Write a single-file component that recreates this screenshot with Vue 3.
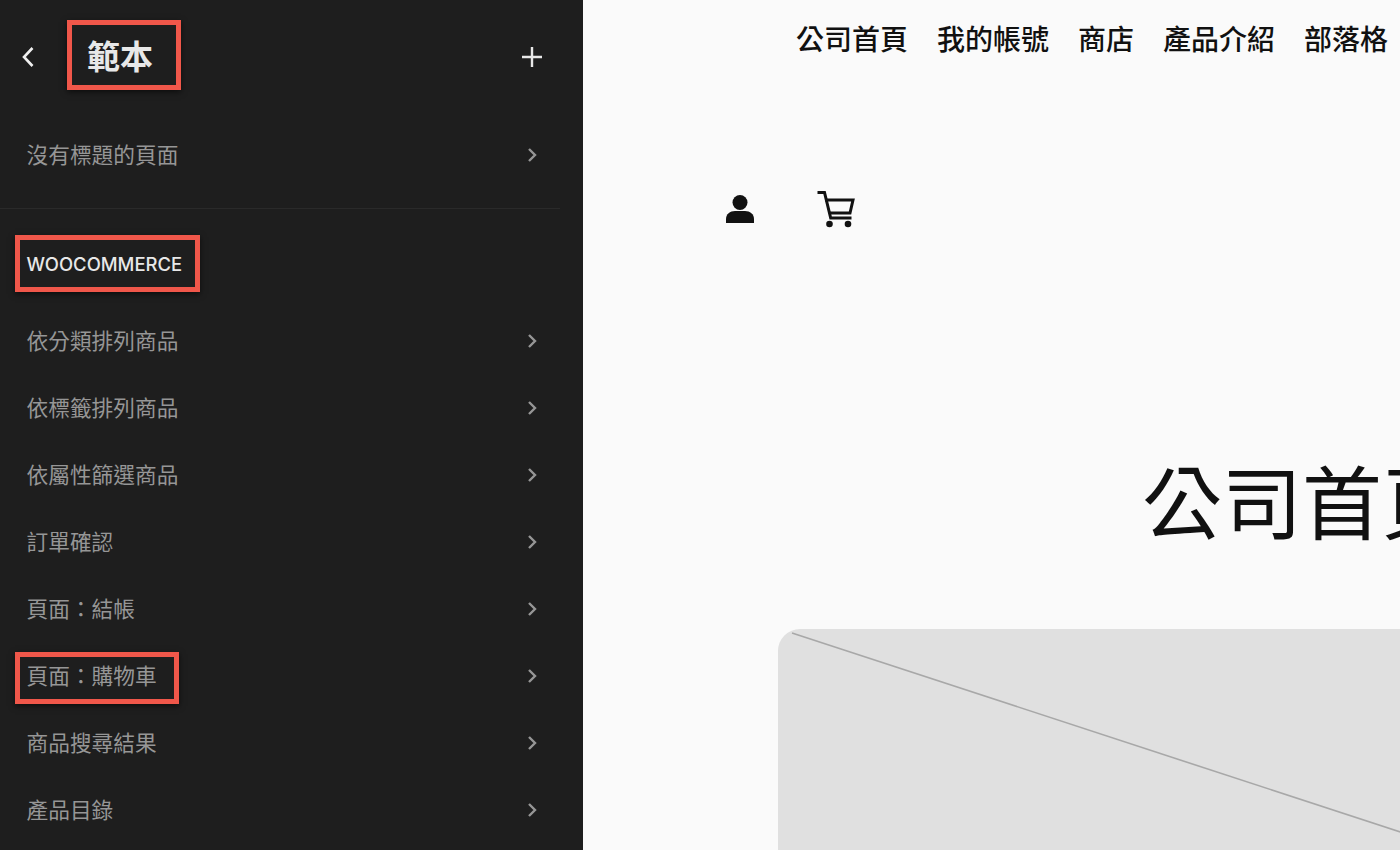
<script setup>
const navLinks = ['公司首頁', '我的帳號', '商店', '產品介紹', '部落格']

const wooItems = [
  { label: '依分類排列商品' },
  { label: '依標籤排列商品' },
  { label: '依屬性篩選商品' },
  { label: '訂單確認' },
  { label: '頁面：結帳' },
  { label: '頁面：購物車', marked: true },
  { label: '商品搜尋結果' },
  { label: '產品目錄' }
]
</script>

<template>
  <div class="page">
    <aside class="sidebar">
      <div class="side-head">
        <svg class="back" width="16" height="24" viewBox="0 0 16 24">
          <path d="M12.5 3 L4 12 L12.5 21" fill="none" stroke="#f0f0f0" stroke-width="2.6" />
        </svg>
        <h1 class="side-title"><span class="mark mark-title">範本</span></h1>
        <svg class="plus" width="22" height="22" viewBox="0 0 22 22">
          <path d="M11 1 V21 M1 11 H21" fill="none" stroke="#e8e8e8" stroke-width="2.4" />
        </svg>
      </div>

      <div class="first-group">
        <a class="row">
          <span>沒有標題的頁面</span>
          <svg class="chev" width="10" height="16" viewBox="0 0 10 16">
            <path d="M2 2 L8 8 L2 14" fill="none" stroke="#969696" stroke-width="2.4" />
          </svg>
        </a>
      </div>

      <div class="group-label">
        <span class="mark mark-label">WOOCOMMERCE</span>
      </div>

      <a v-for="item in wooItems" :key="item.label" class="row">
        <span :class="{ mark: item.marked, 'mark-row': item.marked }">{{ item.label }}</span>
        <svg class="chev" width="10" height="16" viewBox="0 0 10 16">
          <path d="M2 2 L8 8 L2 14" fill="none" stroke="#969696" stroke-width="2.4" />
        </svg>
      </a>
    </aside>

    <main class="preview">
      <nav class="top-nav">
        <a v-for="link in navLinks" :key="link">{{ link }}</a>
      </nav>

      <div class="icons">
        <svg width="30" height="30" viewBox="0 0 30 30">
          <circle cx="15" cy="8.5" r="7.5" fill="#111" />
          <path d="M1 29 V25 C1 20 5 17 10 17 H20 C25 17 29 20 29 25 V29 Z" fill="#111" />
        </svg>
        <svg width="38" height="38" viewBox="0 0 38 38">
          <path d="M0.5 2.5 H7.5 L13.7 28 H34.5" fill="none" stroke="#111" stroke-width="3" />
          <path d="M8 10 H36 L33 23 H12.5" fill="none" stroke="#111" stroke-width="3" />
          <circle cx="12.5" cy="34" r="3.3" fill="#111" />
          <circle cx="31" cy="34" r="3.3" fill="#111" />
        </svg>
      </div>

      <h2 class="page-title">公司首頁</h2>

      <div class="placeholder">
        <svg width="1200" height="400" viewBox="0 0 1200 400">
          <line x1="14" y1="4" x2="1200" y2="392" stroke="#a8a8a8" stroke-width="1.6" />
        </svg>
      </div>
    </main>
  </div>
</template>

<style>
html,
body {
  background: #fafafa;
  overflow: hidden;
}
</style>

<style scoped>
.page {
  display: flex;
  width: 1400px;
  height: 850px;
  overflow: hidden;
  font-family: Inter, "Noto Sans CJK TC", sans-serif;
}

.sidebar {
  flex: 0 0 583px;
  height: 850px;
  overflow: hidden;
  background: #1e1e1e;
  color: #969696;
  box-sizing: border-box;
}

.side-head {
  display: flex;
  align-items: center;
  height: 114px;
  padding: 0 40px 0 20px;
}

.back {
  margin-right: 51px;
}

.side-title {
  flex: 1;
  margin: 0;
  font-size: 33px;
  font-weight: 700;
  line-height: 40px;
  color: #e8e8e8;
}

.first-group {
  height: 95px;
  padding-top: 6px;
  margin-right: 23px;
  box-sizing: border-box;
  border-bottom: 1px solid #2a2a2a;
}

.group-label {
  height: 97px;
  padding: 43px 27px 0 26.5px;
  box-sizing: border-box;
  font-size: 18.45px;
  font-weight: 500;
  line-height: 24px;
  color: #e8e8e8;
}

.row {
  display: flex;
  align-items: center;
  justify-content: space-between;
  height: 67px;
  padding: 0 46px 0 26.5px;
  font-size: 21.7px;
}

.first-group .row {
  padding-right: 23px;
}

.chev {
  display: block;
  margin-top: 2px;
}

.mark {
  position: relative;
  display: inline-block;
}

.mark::after {
  content: "";
  position: absolute;
  border: 5px solid #f0574a;
  box-shadow: 0 2px 6px rgba(0, 0, 0, 0.6);
  pointer-events: none;
}

.mark-title::after {
  inset: -17px -28px -13px -20px;
}

.mark-label::after {
  inset: -17px -18px -16px -12px;
}

.mark-row::after {
  inset: -7px -22px -14px -12px;
}

.preview {
  flex: 1;
  min-width: 0;
  background: #fafafa;
  color: #111;
}

.top-nav {
  display: flex;
  gap: 29px;
  padding: 18px 0 0 213px;
  font-size: 28px;
  font-weight: 500;
  line-height: 44px;
  white-space: nowrap;
}

.icons {
  display: flex;
  align-items: center;
  gap: 62px;
  margin-top: 128px;
  padding-left: 142px;
}

.icons svg {
  display: block;
}

.page-title {
  margin: 226px 0 0 559px;
  font-size: 80px;
  font-weight: 400;
  line-height: 100px;
  white-space: nowrap;
}

.placeholder {
  width: 1200px;
  height: 400px;
  margin: 75px 0 0 195px;
  border-radius: 22px;
  overflow: hidden;
  background: #e0e0e0;
}

.placeholder svg {
  display: block;
}
</style>
